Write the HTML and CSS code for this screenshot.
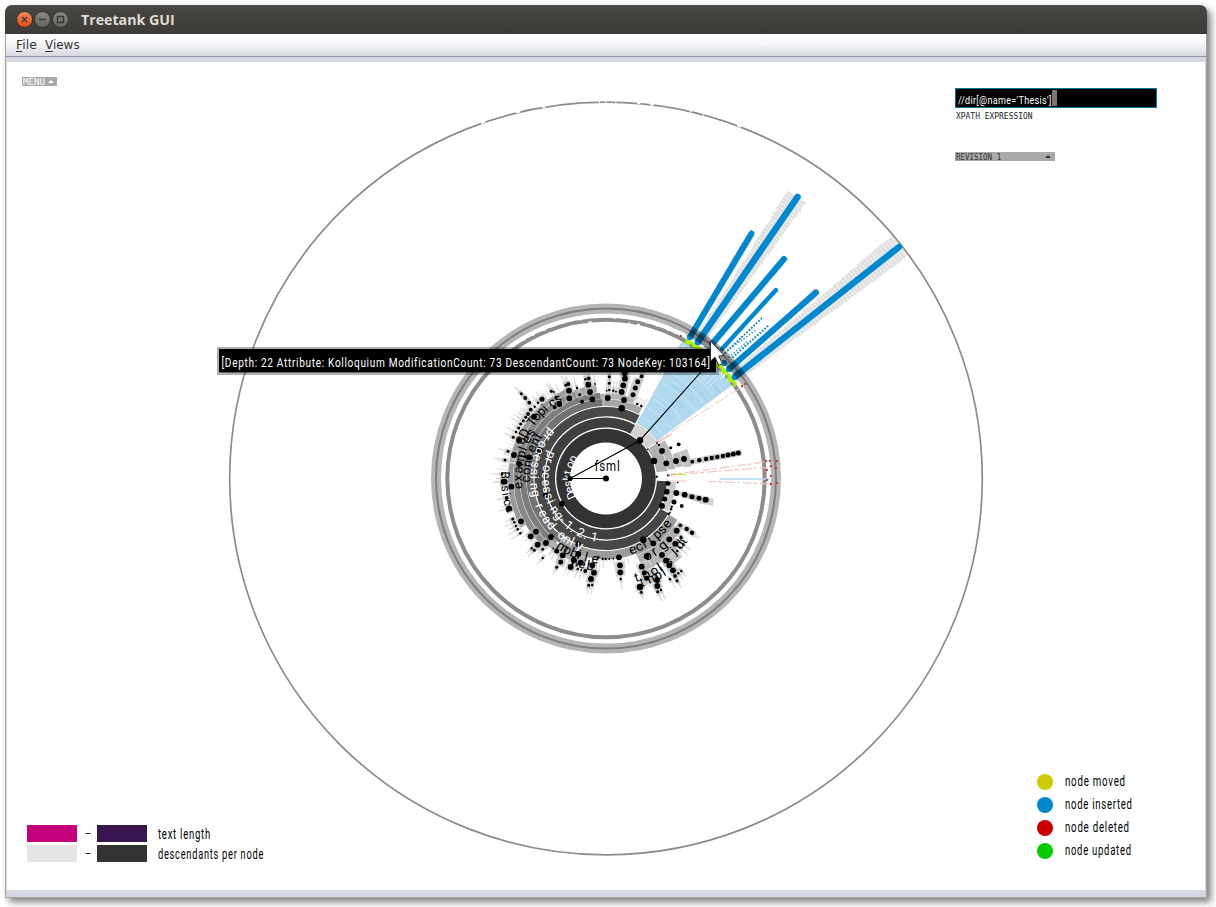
FILE: index.html
```html
<!DOCTYPE html>
<html lang="en">
<head>
<meta charset="utf-8">
<title>Treetank GUI</title>
<link rel="stylesheet" href="styles.css">
</head>
<body>
<div class="window">
  <header class="titlebar">
    <svg class="buttons" width="54" height="18" viewBox="0 0 54 18">
      <defs>
        <linearGradient id="close" x2="0" y2="1"><stop stop-color="#f58a5f"/><stop offset="1" stop-color="#df4a10"/></linearGradient>
        <linearGradient id="btn" x2="0" y2="1"><stop stop-color="#8b8982"/><stop offset="1" stop-color="#65635d"/></linearGradient>
      </defs>
      <g stroke="#2f2e2a" stroke-width="1">
        <circle cx="8.5" cy="8.5" r="8" fill="url(#close)"/>
        <circle cx="26.5" cy="8.5" r="8" fill="url(#btn)"/>
        <circle cx="44.5" cy="8.5" r="8" fill="url(#btn)"/>
      </g>
      <g fill="none" stroke="#36342f" stroke-width="1.3">
        <path d="M6 6l5 5M11 6l-5 5M23 8.5h7M41.5 5.5h6v6h-6z"/>
      </g>
    </svg>
    <span class="title" data-w="94">Treetank GUI</span>
  </header>
  <nav class="menubar">
    <span class="item" data-w="21"><u>F</u>ile</span>
    <span class="item second" data-w="35"><u>V</u>iews</span>
  </nav>
  <main class="canvas">
    <svg id="chart" class="chart" width="1198" height="828" viewBox="7 62 1198 828"></svg>
    <div class="menu-chip"><span data-w="22">MENU</span><i class="tri"></i></div>
    <div class="controls">
      <div class="xpath"><span data-w="94">//dir[@name='Thesis']</span><i class="caret"></i></div>
      <div class="caption"><span data-w="77">XPATH EXPRESSION</span></div>
      <div class="revision"><span data-w="45">REVISION 1</span><i class="tri"></i></div>
    </div>
    <div class="scale">
      <i class="swatch pink"></i><b>–</b><i class="swatch purple"></i><span class="label" data-w="53">text length</span>
      <i class="swatch light"></i><b>–</b><i class="swatch dark"></i><span class="label" data-w="106">descendants per node</span>
    </div>
    <div class="legend">
      <i class="dot moved"></i><span class="label" data-w="61">node moved</span>
      <i class="dot inserted"></i><span class="label" data-w="68">node inserted</span>
      <i class="dot deleted"></i><span class="label" data-w="65">node deleted</span>
      <i class="dot updated"></i><span class="label" data-w="67">node updated</span>
    </div>
  </main>
</div>
<script src="chart.js"></script>
</body>
</html>
```
FILE: styles.css
```css
* { box-sizing: border-box; }
body { margin: 0; padding: 5px 0 0 5px; height: 907px; background: #fff; overflow: hidden; font-family: Roboto, sans-serif; }
.window {
  width: 1202px; height: 893px;
  display: flex; flex-direction: column;
  background: #d5d8e1; border: 1px solid #a5a5a5; border-top: 0;
  border-radius: 7px 7px 0 0;
  box-shadow: 4px 4px 7px rgba(0,0,0,.5);
}
.titlebar {
  height: 29px; flex: none; display: flex; align-items: center; gap: 11px;
  margin: 0 -1px; padding-left: 11px;
  background: linear-gradient(#55544f 0, #474641 2px, #3c3b37 100%);
  border-radius: 7px 7px 0 0;
}
.title { color: #dfdbd2; font: bold 14.5px "Open Sans", sans-serif; line-height: 20px; }
.menubar {
  height: 23px; flex: none; display: flex; align-items: center;
  padding: 0 0 2px 10px; border-bottom: 1px solid #92939f;
  background: linear-gradient(#fff 0, #f6f6f8 45%, #d6d8e0 100%);
  font: 13px "DejaVu Sans", sans-serif; color: #333;
}
.item.second { margin-left: 8px; }
.item u { text-underline-offset: 2px; }
.canvas { position: relative; height: 828px; margin: 5px 0 0 1px; width: 1198px; background: #fff; }
.chart { display: block; }
[data-w] { display: inline-block; white-space: nowrap; transform-origin: 0 50%; }

.menu-chip {
  position: absolute; left: 15px; top: 15px; width: 35px; height: 9px;
  display: flex; align-items: center; justify-content: space-between; padding: 0 3px 0 1px;
  background: #a9a9a9; color: #fff; font: 9.5px/9px "DejaVu Sans Mono", monospace;
}
.tri { border: 3px solid transparent; border-top: 0; border-bottom: 3px solid currentColor; }

.controls { position: absolute; left: 948px; top: 26px; width: 202px; display: flex; flex-direction: column; }
.xpath {
  height: 20px; display: flex; align-items: flex-end; padding: 0 0 0 2px;
  background: #000; border: 1px solid #08799a; color: #fff;
  font-size: 11px; line-height: 13px; letter-spacing: .4px;
}
.caret { width: 5px; height: 16px; margin-bottom: 1px; background: #777; }
.caption { height: 14px; padding: 3px 0 0 1px; font: 9.5px/10px "DejaVu Sans Mono", monospace; color: #222; }
.revision {
  width: 100px; height: 9px; margin-top: 30px; padding: 0 4px 0 1px;
  display: flex; align-items: center; justify-content: space-between;
  background: #a9a9a9; color: #333; font: 9.5px/9px "DejaVu Sans Mono", monospace;
}

.label { font-size: 14px; line-height: 17px; letter-spacing: 1.1px; color: #000; justify-self: start; }
.scale {
  position: absolute; left: 20px; top: 763px;
  display: grid; grid-template-columns: 50px 20px 50px auto; row-gap: 3px; align-items: center;
}
.scale b { font: 10px/15px Roboto, sans-serif; text-align: center; padding-left: 2px; }
.scale .label { margin: 1px 0 -1px 11px; }
.swatch { height: 17px; }
.pink { background: #c4007a; }
.purple { background: #38154f; }
.light { background: #e4e4e4; }
.dark { background: #333; }

.legend {
  position: absolute; left: 1030px; top: 711px;
  display: grid; grid-template-columns: 16px auto; column-gap: 12px; row-gap: 6px; align-items: center;
}
.dot { width: 16px; height: 16px; border-radius: 50%; }
.moved { background: #cc0; }
.inserted { background: #0088cf; }
.deleted { background: #c00; }
.updated { background: #0c0; }
text { font-family: Roboto, sans-serif; }
```
FILE: chart.js
```js
const CX = 606, CY = 478.5;
const out = [];
const pt = (r, a) => [CX + r * Math.cos(a * Math.PI / 180), CY + r * Math.sin(a * Math.PI / 180)].map(v => v.toFixed(2)).join(' ');
let seed = 7;
const rnd = () => (seed = (seed * 16807) % 2147483647) / 2147483647;

// Annular sector; angles in degrees, clockwise from the positive x axis.
function sector(r0, r1, a0, a1, fill, stroke = 'none', sw = 0) {
  const big = a1 - a0 > 180 ? 1 : 0;
  out.push(`<path d="M${pt(r0, a0)}A${r0} ${r0} 0 ${big} 1 ${pt(r0, a1)}L${pt(r1, a1)}A${r1} ${r1} 0 ${big} 0 ${pt(r1, a0)}Z" fill="${fill}" stroke="${stroke}" stroke-width="${sw}"/>`);
}
function arc(r, a0, a1, color, w, extra = '') {
  out.push(`<path d="M${pt(r, a0)}A${r} ${r} 0 ${a1 - a0 > 180 ? 1 : 0} 1 ${pt(r, a1)}" fill="none" stroke="${color}" stroke-width="${w}" ${extra}/>`);
}
const ring = (r, color, w, o = 1) => out.push(`<circle cx="${CX}" cy="${CY}" r="${r}" fill="none" stroke="${color}" stroke-width="${w}" opacity="${o}"/>`);
const line = (x1, y1, x2, y2, color, w, extra = '') => out.push(`<line x1="${x1}" y1="${y1}" x2="${x2}" y2="${y2}" stroke="${color}" stroke-width="${w}" ${extra}/>`);

// Outer depth rings
ring(376.3, '#8c8c8c', 1.7);
[[-109,1],[-103.5,1],[-99.5,.8],[-90,.3],[-88.5,.3],[-91,.3],[-85,.7],[-83,.8],[-77,.3],[-75,.3],[-69.3,1]].forEach(([a, w]) => arc(376.8, a - w / 3, a + w / 3, '#fff', 2));
ring(158.7, '#8c8c8c', 4);
for (let a = -128; a < -62; a += 2 + rnd() * 3) arc((rnd() < .5 ? 157 : 160.5) + rnd(), a, a + .5 + rnd(), '#fff', 1.2);

// Descendant fans behind the inserted subtrees
[[-59.3,.95,284],[-55.9,1.95,340],[-51,.8,283],[-48.1,.5,254],[-41.6,1,281],[-38.4,2.1,374]].forEach(([a, h, end]) => {
  for (let r = 168; r < end; r += 3.6) {
    const j = rnd() * .3;
    sector(r, Math.min(r + 3.1, end + 1), a - h + j, a + h - rnd() * .2, '#e0e0e0');
  }
});

// Inserted subtree wedge
sector(63.5, 156.5, -61, -36.5, '#b0d9ee');
for (let i = 0; i < 28; i++) {
  const r = 68 + rnd() * 87, a = -60 + rnd() * 21;
  arc(r, a, Math.min(a + 3 + rnd() * 11, -37), i % 3 ? '#93cae8' : '#d9eff9', .9, 'opacity=".7"');
}
[82, 97, 111, 124, 136].forEach(r => arc(r, -60, -37, '#d5edf8', .6));
for (let i = 0; i < 12; i++) { const a = -60 + rnd() * 22; out.push(`<path d="M${pt(138, a)}L${pt(155, a)}" stroke="#e2f3fb" stroke-width=".8"/>`); }
sector(50.5, 63, -61, -36, '#d3d3d3');
out.push(`<path d="M${pt(50.5, -47)}L${pt(63, -47)}" stroke="#fff" stroke-width=".8"/>`);

// Core rings
sector(36, 49.7, 0, 359.99, '#333');
sector(51, 61, 2.5, 298.5, '#3f3f3f');
sector(62.2, 71.5, 29, 298, '#484848');
sector(72.5, 79.3, 268, 297, '#a5a5a5');
sector(79.8, 85, 264, 290, '#b4b4b4');
sector(72.5, 79.5, 126, 267.5, '#737373');
sector(79.9, 86, 128, 266, '#7c7c7c');
sector(86.4, 92.6, 132, 250, '#888');
sector(93, 98, 150, 246, '#999');
sector(86.4, 94, 250, 264, '#a7a7a7');
sector(72.5, 81, 69, 125.5, '#9a9a9a');
sector(81.4, 89, 104, 132, '#b0b0b0');
sector(72.5, 82.5, 30, 68.5, '#9c9c9c');
sector(83, 91, 35, 68, '#adadad');
sector(91.5, 100, 44, 68, '#b7b7b7');
sector(100.5, 109, 46, 54, '#c2c2c2');
sector(100.5, 114, 62, 70, '#c2c2c2');
sector(62.2, 70, 3, 28, '#cacaca');
[[72,11.5],[79,12],[88,12.5],[96,13],[103,12.5]].forEach(([r, a]) => sector(r, r + 7, a - 1.8, a + 1.8, '#d1d1d1'));
sector(50.8, 62, -35, -7, '#b0b0b0');
sector(62.5, 70, -33, -8, '#b7b7b7');
sector(70.5, 78, -20, -9, '#bbb');
sector(78.5, 86.5, -20, -8, '#c3c3c3');

// Nodes: zoomed x, y, radius, in thirds of a pixel from each origin
const groups = [
  [480, 360, '425,145,9 432,120,8 383,114,8 337,118,8 330,96,8 325,74,8 268,115,8 267,92,8 265,72,5 257,76,4 238,132,8 224,142,5 228,112,4 214,94,4 222,96,2 306,125,5 299,104,4 291,84,3 186,118,7 162,170,8 148,128,5 136,114,5 124,101,4 152,149,5 144,162,5 137,172,4 130,182,4 122,192,4 116,204,4 108,216,3 100,232,4 164,140,3 174,128,3 118,242,8 102,285,8 118,312,8 72,365,8 94,380,8 147,292,8 180,270,8 425,96,8 430,76,8 435,56,8 434,40,8 459,104,7 466,84,7 473,65,7 485,49,5 388,90,3 388,70,4 388,50,4 380,92,2 400,92,3 408,95,2 316,58,3 326,55,5 345,72,2 484,138,3 472,132,3 75,300,4 84,274,4 66,342,3 480,241,9 522,303,9'],
  [480, 470, '246,101,8 198,76,8 70,35,7 87,115,8 80,84,5 98,147,4 103,157,3 108,168,3 113,178,3 121,190,3 123,154,8 168,185,8 152,199,8 173,224,8 198,219,8 213,201,8 155,235,3 163,241,4 188,238,4 188,264,3 230,243,7 248,256,8 242,276,7 230,292,4 295,223,8 295,252,8 281,270,8 272,291,8 302,278,8 337,286,8 342,308,8 333,327,8 326,346,4 337,345,3 316,303,5 293,297,3 304,300,2 220,235,2 368,267,3 377,267,3 388,267,2 400,266,2 355,262,3 417,262,8 420,286,8 421,307,8 422,327,3 490,209,9'],
  [600, 420, '161,123,8 186,93,8 199,130,8 228,123,8 252,117,8 277,125,5 298,121,6 318,117,6 335,114,6 352,111,6 369,108,6 384,105,7 400,102,7 415,99,7 212,83,4 236,73,5 205,166,3 170,170,3 171,68,3 177,75,3 143,88,2 204,190,7 200,215,8 229,219,8 254,224,8 276,230,7 297,235,7 317,239,8 194,237,7 186,258,8 222,246,7 245,258,5 215,260,3 213,268,3 210,277,2 206,282,3 233,187,2 130,359,8 160,370,8 208,358,8 226,371,8 230,332,8 241,316,5 260,327,6 276,338,6 243,351,4 250,373,3 240,383,3 232,393,3 140,409,8 125,440,8 133,458,7 140,475,7 186,405,8 198,422,8 208,436,8 219,451,8 225,468,5 231,482,4 235,460,3 244,453,3 171,480,8 172,498,8 120,501,9 124,517,4 173,515,4 183,510,3 210,478,3']
];
const nodes = groups.flatMap(([ox, oy, s]) => s.split(' ').map(t => { const [x, y, r] = t.split(',').map(Number); return [ox + x / 3, oy + y / 3, r / 3]; }));
nodes.forEach(([x, y, r]) => {
  const d = Math.hypot(x - CX, y - CY);
  if (d < 84) return;
  const a = Math.atan2(y - CY, x - CX) * 180 / Math.PI;
  const east = Math.abs(a) < 16;
  const h = east ? 3 : r > 2 ? 4.8 : r * 1.5;
  out.push(`<g transform="translate(${x.toFixed(1)} ${y.toFixed(1)}) rotate(${a.toFixed(1)})"><rect x="-3.8" y="${-h}" width="7.4" height="${2 * h}" fill="#b5b5b5" opacity=".62"/>` +
    (east ? '' : `<rect x="3.5" y="-.6" width="${(4 + rnd() * 4).toFixed(1)}" height="1.2" fill="#ddd"/><rect x="3.5" y="${h - 2}" width="${(2 + rnd() * 4).toFixed(1)}" height="1" fill="#ddd"/>`) + '</g>');
});
for (let a = 185; a < 242; a += 2.1) out.push(`<path d="M${pt(97, a)}L${pt(102 + rnd() * 9, a)}" stroke="#ddd" stroke-width="1.1"/>`);
for (let a = 75; a < 104; a += 2.4) out.push(`<path d="M${pt(81, a)}L${pt(84 + rnd() * 8, a)}" stroke="#d8d8d8" stroke-width="1"/>`);
for (let a = 290; a < 299; a += 1.8) out.push(`<path d="M${pt(79, a)}L${pt(86 + rnd() * 4, a)}" stroke="#d0d0d0" stroke-width="1"/>`);
nodes.forEach(([x, y, r]) => out.push(`<circle cx="${x.toFixed(1)}" cy="${y.toFixed(1)}" r="${(r + .2).toFixed(1)}"/>`));

// Deleted and moved traces
const dash = 'stroke-dasharray="8 2 4 3 10 2 2 4"';
line(657, 441, 745, 385, '#f6c4c4', 1, dash);
line(656, 443, 672, 434, '#efa0a0', 1);
line(668, 475, 772, 461, '#f5c2c2', 1.2, dash);
line(690, 473.5, 772, 467, '#f5c2c2', 1.2, dash);
line(708, 481.3, 772, 484, '#f5c2c2', 1.1, dash);
line(668, 481, 687, 481, '#f8cccc', 1.2);
line(668, 475, 678, 474.5, '#ef9c9c', 1);
line(677.5, 474.5, 686, 474.5, '#c9ee30', 1.4);
line(720, 479, 770, 479, '#b0daf0', 1.5);

// Inserted subtrees
sector(157, 161.8, -60, -35.6, '#a8f500');
for (let a = -58; a < -37; a += 3.4) arc(157.5, a, a + 1.2, '#8c8c8c', 2.5);
const blue = '#0088cf', round = 'stroke-linecap="round"';
[[690,337,751.5,233.5,6],[698,342,797.5,197,6.6],[712,344,784,259,6],[722,349,776,290,4.4],[729,369,816,292.5,6],[735,376.6,899,247,6.4]].forEach(l => line(l[0], l[1], l[2], l[3], blue, l[4], round));
[[723,355,763,317,2],[733,357,768,326,2],[728,350,756,330,1.4],[729,357,749,340,1.4]].forEach(l => line(l[0], l[1], l[2], l[3], blue, l[4], `${round} stroke-dasharray=".1 3.2"`));
[[690,337],[698,342],[724,363],[729,369],[735,377]].forEach(p => out.push(`<circle cx="${p[0]}" cy="${p[1]}" r="3.1" fill="${blue}"/>`));
ring(170, '#000', 10, .29);
ring(170, '#000', 2, .3);
arc(169, -60, -37, '#000', 9, 'opacity=".22"');
out.push(`<path d="M${pt(165, -59)}A165 165 0 0 1 ${pt(165, -36)}" fill="none" stroke="#0088cf" stroke-width="2" stroke-dasharray="1 3" opacity=".5"/>`);
out.push('<path d="M720 379l7-6M721 372l4 5" stroke="#fff" stroke-width="1"/>');
[[681,336],[709,342],[745,384],[742,386],[766,461],[770,461],[777,461],[771,466],[776,468],[767,470],[771,476],[771,484],[777,483],[767,480]].forEach(p => out.push(`<rect x="${p[0] - 1}" y="${p[1] - 1}" width="1.8" height="2" fill="#d03030"/>`));

// Names laid along their rings
let pid = 0;
function label(text, r, a0, a1, fill, size = 13) {
  const id = 'p' + pid++, cw = a1 > a0 ? 1 : 0, len = Math.abs(a1 - a0) * Math.PI / 180 * r;
  out.push(`<path id="${id}" d="M${pt(r, a0)}A${r} ${r} 0 0 ${cw} ${pt(r, a1 + (cw ? 12 : -12))}" fill="none"/>`);
  const step = len / text.length;
  const xs = [...text].map((_, i) => (i * step).toFixed(1)).join(' ');
  out.push(`<text font-size="${size}" fill="${fill}" x="${xs}"><textPath href="#${id}">${text}</textPath></text>`);
}
label('Desktop', 34.5, 148, 214, '#fff', 12);
label('processing-1.2.1', 64, 206, 98, '#fff', 12.5);
label('processing-read-only', 76, 222, 108, '#fff', 12.5);
label('mobile', 85.5, 126, 95, '#000', 13.5);
label('web', 93, 113, 97, '#000', 13);
label('eclipse', 80, 72, 34, '#000', 13.5);
label('org', 92, 64, 46, '#000', 13.5);
label('tools', 108, 74, 50, '#000', 13);
label('tmpl', 114, 72, 55, '#000', 13);
label('jdt', 103, 48, 36, '#000', 13);
label('examples', 84, 173, 214, '#000', 13);
label('content', 76, 177, 216, '#000', 13);
label('3D Topics', 89, 202, 241, '#000', 13);
label('Basics', 105, 184, 160, '#000', 12);

// Path from the root to the hovered node
line(606, 478.5, 570, 478.5, '#000', 1.2);
out.push('<path d="M570 478.5L639.7 440.7L709 363" fill="none" stroke="#000" stroke-width="1.1"/>');
out.push('<circle cx="606" cy="478.5" r="3"/><circle cx="570" cy="478.5" r="2.6"/><circle cx="639.7" cy="440.7" r="3"/>');
out.push('<text x="594.5" y="470.5" font-size="14" letter-spacing="1" textLength="26" lengthAdjust="spacingAndGlyphs">fsml</text>');

// Tooltip and pointer
out.push('<rect x="217" y="347" width="502" height="28" opacity=".31"/><rect x="219" y="349" width="497" height="23.4"/>');
out.push('<text x="221.5" y="367" font-size="13.5" fill="#fff" letter-spacing=".9" textLength="489" lengthAdjust="spacingAndGlyphs">[Depth: 22 Attribute: Kolloquium ModificationCount: 73 DescendantCount: 73 NodeKey: 103164]</text>');
out.push('<path d="M710.5 341V361L715 357.2L718.8 365.4L722.4 363.8L718.8 356L724 355.5Z" fill="#fff" stroke="#333" stroke-width="1"/>');

document.getElementById('chart').innerHTML = out.join('');

// Condense each label to its design width; layout takes the same width.
document.querySelectorAll('[data-w]').forEach(el => {
  const natural = el.offsetWidth, want = +el.dataset.w;
  el.style.transform = `scaleX(${want / natural})`;
  el.style.width = want + 'px';
});
```
